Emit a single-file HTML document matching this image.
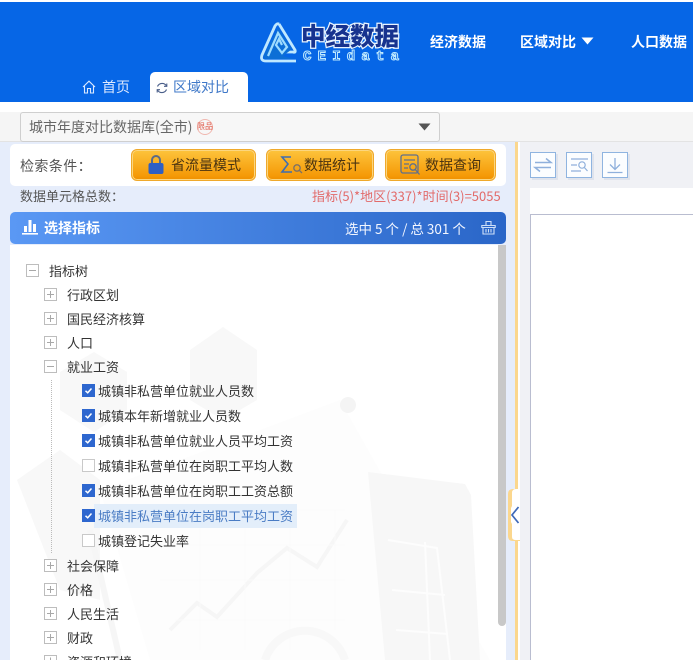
<!DOCTYPE html>
<html lang="zh"><head><meta charset="utf-8"><style>
*{box-sizing:border-box}
html,body{margin:0;padding:0;width:693px;height:660px;overflow:hidden}
body{position:relative;background:#fff;font-family:"Liberation Sans","Noto Sans CJK SC",sans-serif;color:#333}
#root{position:absolute;left:0;top:0;width:693px;height:660px;overflow:hidden;contain:paint}
.a{position:absolute}
.t{position:absolute;height:20px;line-height:20px;white-space:nowrap;font-family:"Noto Sans CJK SC","Liberation Sans",sans-serif;font-size:13px;color:#333}
.nav{color:#fff;font-size:14px;font-weight:700;top:32px}
.btn{position:absolute;top:149px;height:32px;border:1px solid #efa92c;border-radius:6px;background:linear-gradient(#fdc43c,#f59a08 85%,#ef8f00);box-shadow:inset 0 0 0 1px #fcd67e}
.box{position:absolute;width:13px;height:13px;border:1px solid #bdbdbd;background:#fff}
.box:before{content:"";position:absolute;left:2px;right:2px;top:5px;height:1px;background:#a8a8a8}
.plus:after{content:"";position:absolute;top:2px;bottom:2px;left:5px;width:1px;background:#a8a8a8}
.ck{position:absolute;left:82px;width:13px;height:13px;background:#2e67cf}
.ck svg{display:block}
.un{position:absolute;left:82px;width:13px;height:13px;border:1px solid #c9c9c9;background:#fff}
.ic{position:absolute;top:152px;width:26px;height:26px;border:1px solid #8fb4e0;background:#fbfdff;box-shadow:2px 2px 0 #dfe3ec}
</style></head><body><div id="root">
<div class="a" style="left:0;top:2px;width:693px;height:100px;background:#0666e6"></div>

<svg class="a" style="left:258px;top:20px" width="42" height="44" viewBox="0 0 42 44">
<path d="M21 4 L37 30 Q38 33 35 32 L28 32 M21 4 Q19 3 17 6 L4 35 Q2 41 8 41 L38 41" fill="none" stroke="#bfe8ff" stroke-width="2.8" stroke-linejoin="round"/>
<path d="M20 8 L34 29 L25 36 L36 39 L9 39 Q5 39 6 35 Z" fill="#0d6fd6"/>
<path d="M10 36 L20 13 L29 27 L24 33 L18 25 L21 19 L24 25" fill="none" stroke="#9fdcff" stroke-width="2.2"/>
</svg>
<div class="t" style="left:301px;top:21px;height:30px;line-height:30px;font-size:24.5px;font-weight:900;color:#17338f;-webkit-text-stroke:2.5px #e8f4ff;paint-order:stroke fill;letter-spacing:0">中经数据</div>
<div class="t" style="left:303px;top:47px;font-family:'Liberation Mono',monospace;font-size:14px;font-weight:700;color:#0666e6;-webkit-text-stroke:1px #bfeaff;letter-spacing:6.2px">CEIdata</div>

<div class="t nav" style="left:430px">经济数据</div>
<div class="t nav" style="left:520px">区域对比</div>
<svg class="a" style="left:581px;top:37px" width="13" height="8"><path d="M0.5 0.5H12.5L6.5 7.5Z" fill="#fff"/></svg>
<div class="t nav" style="left:631px">人口数据</div>

<svg class="a" style="left:82px;top:80px" width="14" height="14" viewBox="0 0 14 14" fill="none" stroke="#dbe9ff" stroke-width="1.1"><path d="M1 7 7 1.2 13 7M2.5 6V13H5.5V8.5H8.5V13H11.5V6"/></svg>
<div class="t" style="left:102px;top:77px;font-size:14px;color:#dfeaff">首页</div>
<div class="a" style="left:150px;top:72px;width:98px;height:30px;background:#fff;border-radius:5px 5px 0 0"></div>
<svg class="a" style="left:156px;top:82px" width="12" height="12" viewBox="0 0 12 12" fill="none" stroke="#4a5f8a" stroke-width="1.1"><path d="M10.5 4A5 5 0 0 0 1.5 4.5M1.5 8A5 5 0 0 0 10.5 7.5"/><path d="M10.8 1.5V4.3H8M1.2 10.5V7.7H4"/></svg>
<div class="t" style="left:173px;top:77px;font-size:14px;color:#3f78c8">区域对比</div>

<div class="a" style="left:0;top:112px;width:693px;height:30px;background:#f5f5f5;border-bottom:1px solid #e3e3e3"></div>
<div class="a" style="left:20px;top:112px;width:420px;height:30px;background:#f7f7f7;border:1px solid #cfcfcf;border-radius:3px"></div>
<div class="t" style="left:29px;top:117px;font-size:14px;color:#666">城市年度对比数据库(全市)</div>
<div class="a" style="left:197px;top:119px;width:16px;height:16px;border:1px solid #f0b8b0;border-radius:50%"></div>
<div class="t" style="left:197px;top:117px;font-size:8px;color:#e05a4a;letter-spacing:0">限品</div>
<svg class="a" style="left:418px;top:123px" width="13" height="8"><path d="M0.5 0.5H12.5L6.5 7.5Z" fill="#555"/></svg>

<div class="a" style="left:0;top:142px;width:515px;height:518px;background:#e6edfb"></div>
<div class="a" style="left:515px;top:142px;width:3px;height:518px;background:#fbd78e"></div>
<div class="a" style="left:518px;top:142px;width:2px;height:518px;background:#fff"></div>
<div class="a" style="left:520px;top:142px;width:173px;height:518px;background:#f0f1f5"></div>

<div class="a" style="left:10px;top:144px;width:496px;height:42px;background:#fff;border-radius:5px"></div>
<div class="t" style="left:20px;top:156px;font-size:14px;color:#555;letter-spacing:.4px">检索条件：</div>

<div class="btn" style="left:131px;width:125px"></div>
<svg class="a" style="left:148px;top:154px" width="16" height="21" viewBox="0 0 16 21"><path d="M4 10V6a4 4 0 0 1 8 0v4" fill="none" stroke="#5b6a86" stroke-width="2"/><rect x="0.5" y="9" width="15" height="11" rx="2" fill="#2e5fc4"/></svg>
<div class="t" style="left:171px;top:155px;font-size:14px;color:#4a3310">省流量模式</div>

<div class="btn" style="left:266px;width:108px"></div>
<svg class="a" style="left:280px;top:155px" width="24" height="20" viewBox="0 0 24 20" fill="none"><path d="M11 2H2L8 9 2 17H12" stroke="#3f6db0" stroke-width="1.6"/><circle cx="17" cy="13" r="3.2" stroke="#7a7068" stroke-width="1.3"/><path d="M19.4 15.4 22 18" stroke="#7a7068" stroke-width="1.3"/></svg>
<div class="t" style="left:304px;top:155px;font-size:14px;color:#4a3310">数据统计</div>

<div class="btn" style="left:385px;width:111px"></div>
<svg class="a" style="left:400px;top:154px" width="21" height="22" viewBox="0 0 21 22" fill="none" stroke="#5f6f8c" stroke-width="1.3"><rect x="1" y="1" width="17" height="18" rx="2"/><path d="M4 6H15M4 10H9M4 14H8"/><circle cx="13" cy="13" r="3.2"/><path d="M15.3 15.5 19.5 20.5"/></svg>
<div class="t" style="left:425px;top:155px;font-size:14px;color:#4a3310">数据查询</div>

<div class="t" style="left:20px;top:186px;color:#555">数据单元格总数：</div>
<div class="t" style="left:312px;top:186px;color:#e26a6a">指标(5)*地区(337)*时间(3)=5055</div>

<div class="a" style="left:10px;top:212px;width:496px;height:32px;border-radius:5px;background:linear-gradient(90deg,#5a98f4,#2a66c8)"></div>
<svg class="a" style="left:22px;top:219px" width="16" height="16" viewBox="0 0 16 16" fill="#fff"><rect x="2" y="7" width="3" height="6"/><rect x="6.5" y="1" width="3" height="12"/><rect x="11" y="5" width="3" height="8"/><rect x="0" y="14" width="16" height="1.6"/></svg>
<div class="t" style="left:44px;top:218px;font-size:14px;font-weight:700;color:#fff">选择指标</div>
<div class="t" style="left:345px;top:218px;font-size:13.5px;color:#f2f6ff">选中 5 个 / 总 301 个</div>
<svg class="a" style="left:481px;top:220px" width="15" height="15" viewBox="0 0 15 15" fill="none" stroke="#cfe0f8" stroke-width="1.1"><path d="M5 5V1.5H10V5M.8 5.5H14.2V7.5H.8ZM2 7.5V14H13V7.5M5 9V12.5M7.5 9V12.5M10 9V12.5"/></svg>

<div class="a" style="left:10px;top:245px;width:496px;height:415px;background:#fff;overflow:hidden"></div>
<svg class="a" style="left:10px;top:245px" width="496" height="415" viewBox="10 245 496 415">
<g fill="#f8f8f8">
<polygon points="223,327 257,350 257,400 223,420 190,400 190,350"/>
<polygon points="94,352 127,372 127,410 94,432 60,410 60,372"/>
<polygon points="60,450 100,480 100,600 60,590 17,480"/>
</g>
<polygon points="100,490 340,400 385,480 490,660 150,660" fill="#fdfdfd"/>
<circle cx="348" cy="405" r="8" fill="#f4f4f4"/>
<polygon points="368,472 465,484 471,495 480,660 385,660" fill="#f7f7f7"/>
<path d="M388 540 437 548 450 660M425 542 430 660M392 590 445 595M396 630 448 634" stroke="#fdfdfd" stroke-width="2" fill="none"/>
<path d="M170 630 197 603 217 617 257 573 287 548 317 567 347 520" fill="none" stroke="#f6f6f6" stroke-width="4"/>
<path d="M160 510H345M160 545H345M160 580H345M175 620H345M200 510V650M245 510V650M290 510V650M335 510V630" stroke="#fafafa" stroke-width="1" fill="none"/>
<path d="M90 530 120 660" stroke="#f6f6f6" stroke-width="6"/>
<path d="M265 660A42 42 0 0 1 345 660" fill="none" stroke="#f8f8f8" stroke-width="8"/>
</svg>

<div class="a" style="left:498px;top:245px;width:8px;height:381px;background:#c8c8c8;border-radius:0 0 4px 4px"></div>

<div class="box" style="left:26px;top:264px"></div>
<div class="t" style="left:49px;top:261px">指标树</div>
<div class="box plus" style="left:44px;top:288px"></div><div class="t" style="left:67px;top:285px">行政区划</div>
<div class="box plus" style="left:44px;top:312px"></div><div class="t" style="left:67px;top:309px">国民经济核算</div>
<div class="box plus" style="left:44px;top:336px"></div><div class="t" style="left:67px;top:333px">人口</div>
<div class="box" style="left:44px;top:360px"></div><div class="t" style="left:67px;top:357px">就业工资</div>

<div class="a" style="left:51px;top:380px;height:173px;border-left:1px dotted #bbb"></div>
<div class="a" style="left:94px;top:504px;width:203px;height:24px;background:#e3eefa"></div>

<div class="ck" style="top:384px"><svg width="13" height="13"><path d="M3.5 6.8 5.7 8.8 9.5 4.5" fill="none" stroke="#fff" stroke-width="1.5"/></svg></div>
<div class="t" style="left:98px;top:381px">城镇非私营单位就业人员数</div>
<div class="ck" style="top:409px"><svg width="13" height="13"><path d="M3.5 6.8 5.7 8.8 9.5 4.5" fill="none" stroke="#fff" stroke-width="1.5"/></svg></div>
<div class="t" style="left:98px;top:406px">城镇本年新增就业人员数</div>
<div class="ck" style="top:434px"><svg width="13" height="13"><path d="M3.5 6.8 5.7 8.8 9.5 4.5" fill="none" stroke="#fff" stroke-width="1.5"/></svg></div>
<div class="t" style="left:98px;top:431px">城镇非私营单位就业人员平均工资</div>
<div class="un" style="top:459px"></div>
<div class="t" style="left:98px;top:456px">城镇非私营单位在岗职工平均人数</div>
<div class="ck" style="top:484px"><svg width="13" height="13"><path d="M3.5 6.8 5.7 8.8 9.5 4.5" fill="none" stroke="#fff" stroke-width="1.5"/></svg></div>
<div class="t" style="left:98px;top:481px">城镇非私营单位在岗职工工资总额</div>
<div class="ck" style="top:509px"><svg width="13" height="13"><path d="M3.5 6.8 5.7 8.8 9.5 4.5" fill="none" stroke="#fff" stroke-width="1.5"/></svg></div>
<div class="t" style="left:98px;top:506px;color:#4a7cc4">城镇非私营单位在岗职工平均工资</div>
<div class="un" style="top:534px"></div>
<div class="t" style="left:98px;top:531px">城镇登记失业率</div>

<div class="box plus" style="left:44px;top:559px"></div><div class="t" style="left:67px;top:556px">社会保障</div>
<div class="box plus" style="left:44px;top:583px"></div><div class="t" style="left:67px;top:580px">价格</div>
<div class="box plus" style="left:44px;top:607px"></div><div class="t" style="left:67px;top:604px">人民生活</div>
<div class="box plus" style="left:44px;top:631px"></div><div class="t" style="left:67px;top:628px">财政</div>
<svg class="a" style="left:44px;top:655px" width="13" height="5"><path d="M.5 5V.5H12.5V5" fill="none" stroke="#bdbdbd"/><path d="M6.5 2.5V5" stroke="#a8a8a8"/></svg>
<div class="t" style="left:67px;top:652px;height:8px;overflow:hidden">资源和环境</div>

<svg class="a" style="left:508px;top:488px" width="12" height="54" viewBox="0 0 12 54">
<path d="M12 1H5Q0 1 0 6V19L-1 21V33L0 35V48Q0 53 5 53H12Z" fill="#fbd78e"/>
<path d="M12 1H8Q4 1 4 5V18L3 20V34L4 36V49Q4 52 8 52H12Z" fill="#fff"/>
<path d="M10.5 19 4 27 10.5 35" fill="none" stroke="#3d68b8" stroke-width="1.7"/>
</svg>

<div class="ic" style="left:530px"><svg width="24" height="24" viewBox="0 0 24 24" fill="none" stroke="#8fb0dc" stroke-width="1.5"><path d="M4 9.5H20L15 5.5M20 14.5H4L9 18.5"/></svg></div>
<div class="ic" style="left:566px"><svg width="24" height="24" viewBox="0 0 24 24" fill="none" stroke="#8fb0dc" stroke-width="1.2"><path d="M4 6H21M4 12H10M4 18H14"/><circle cx="15" cy="12" r="3.2"/><path d="M17.4 14.5 20.5 18"/></svg></div>
<div class="ic" style="left:602px"><svg width="24" height="24" viewBox="0 0 24 24" fill="none" stroke="#8fb0dc" stroke-width="1.3"><path d="M12 5V16M7 11.5 12 16.5 17 11.5M4.5 19.5H19.5"/></svg></div>

<div class="a" style="left:530px;top:188px;width:163px;height:472px;background:#fff"></div>
<div class="a" style="left:530px;top:214px;width:163px;height:446px;border-left:1px solid #b9bdd0;border-top:1px solid #b9bdd0"></div>
</div></body></html>
